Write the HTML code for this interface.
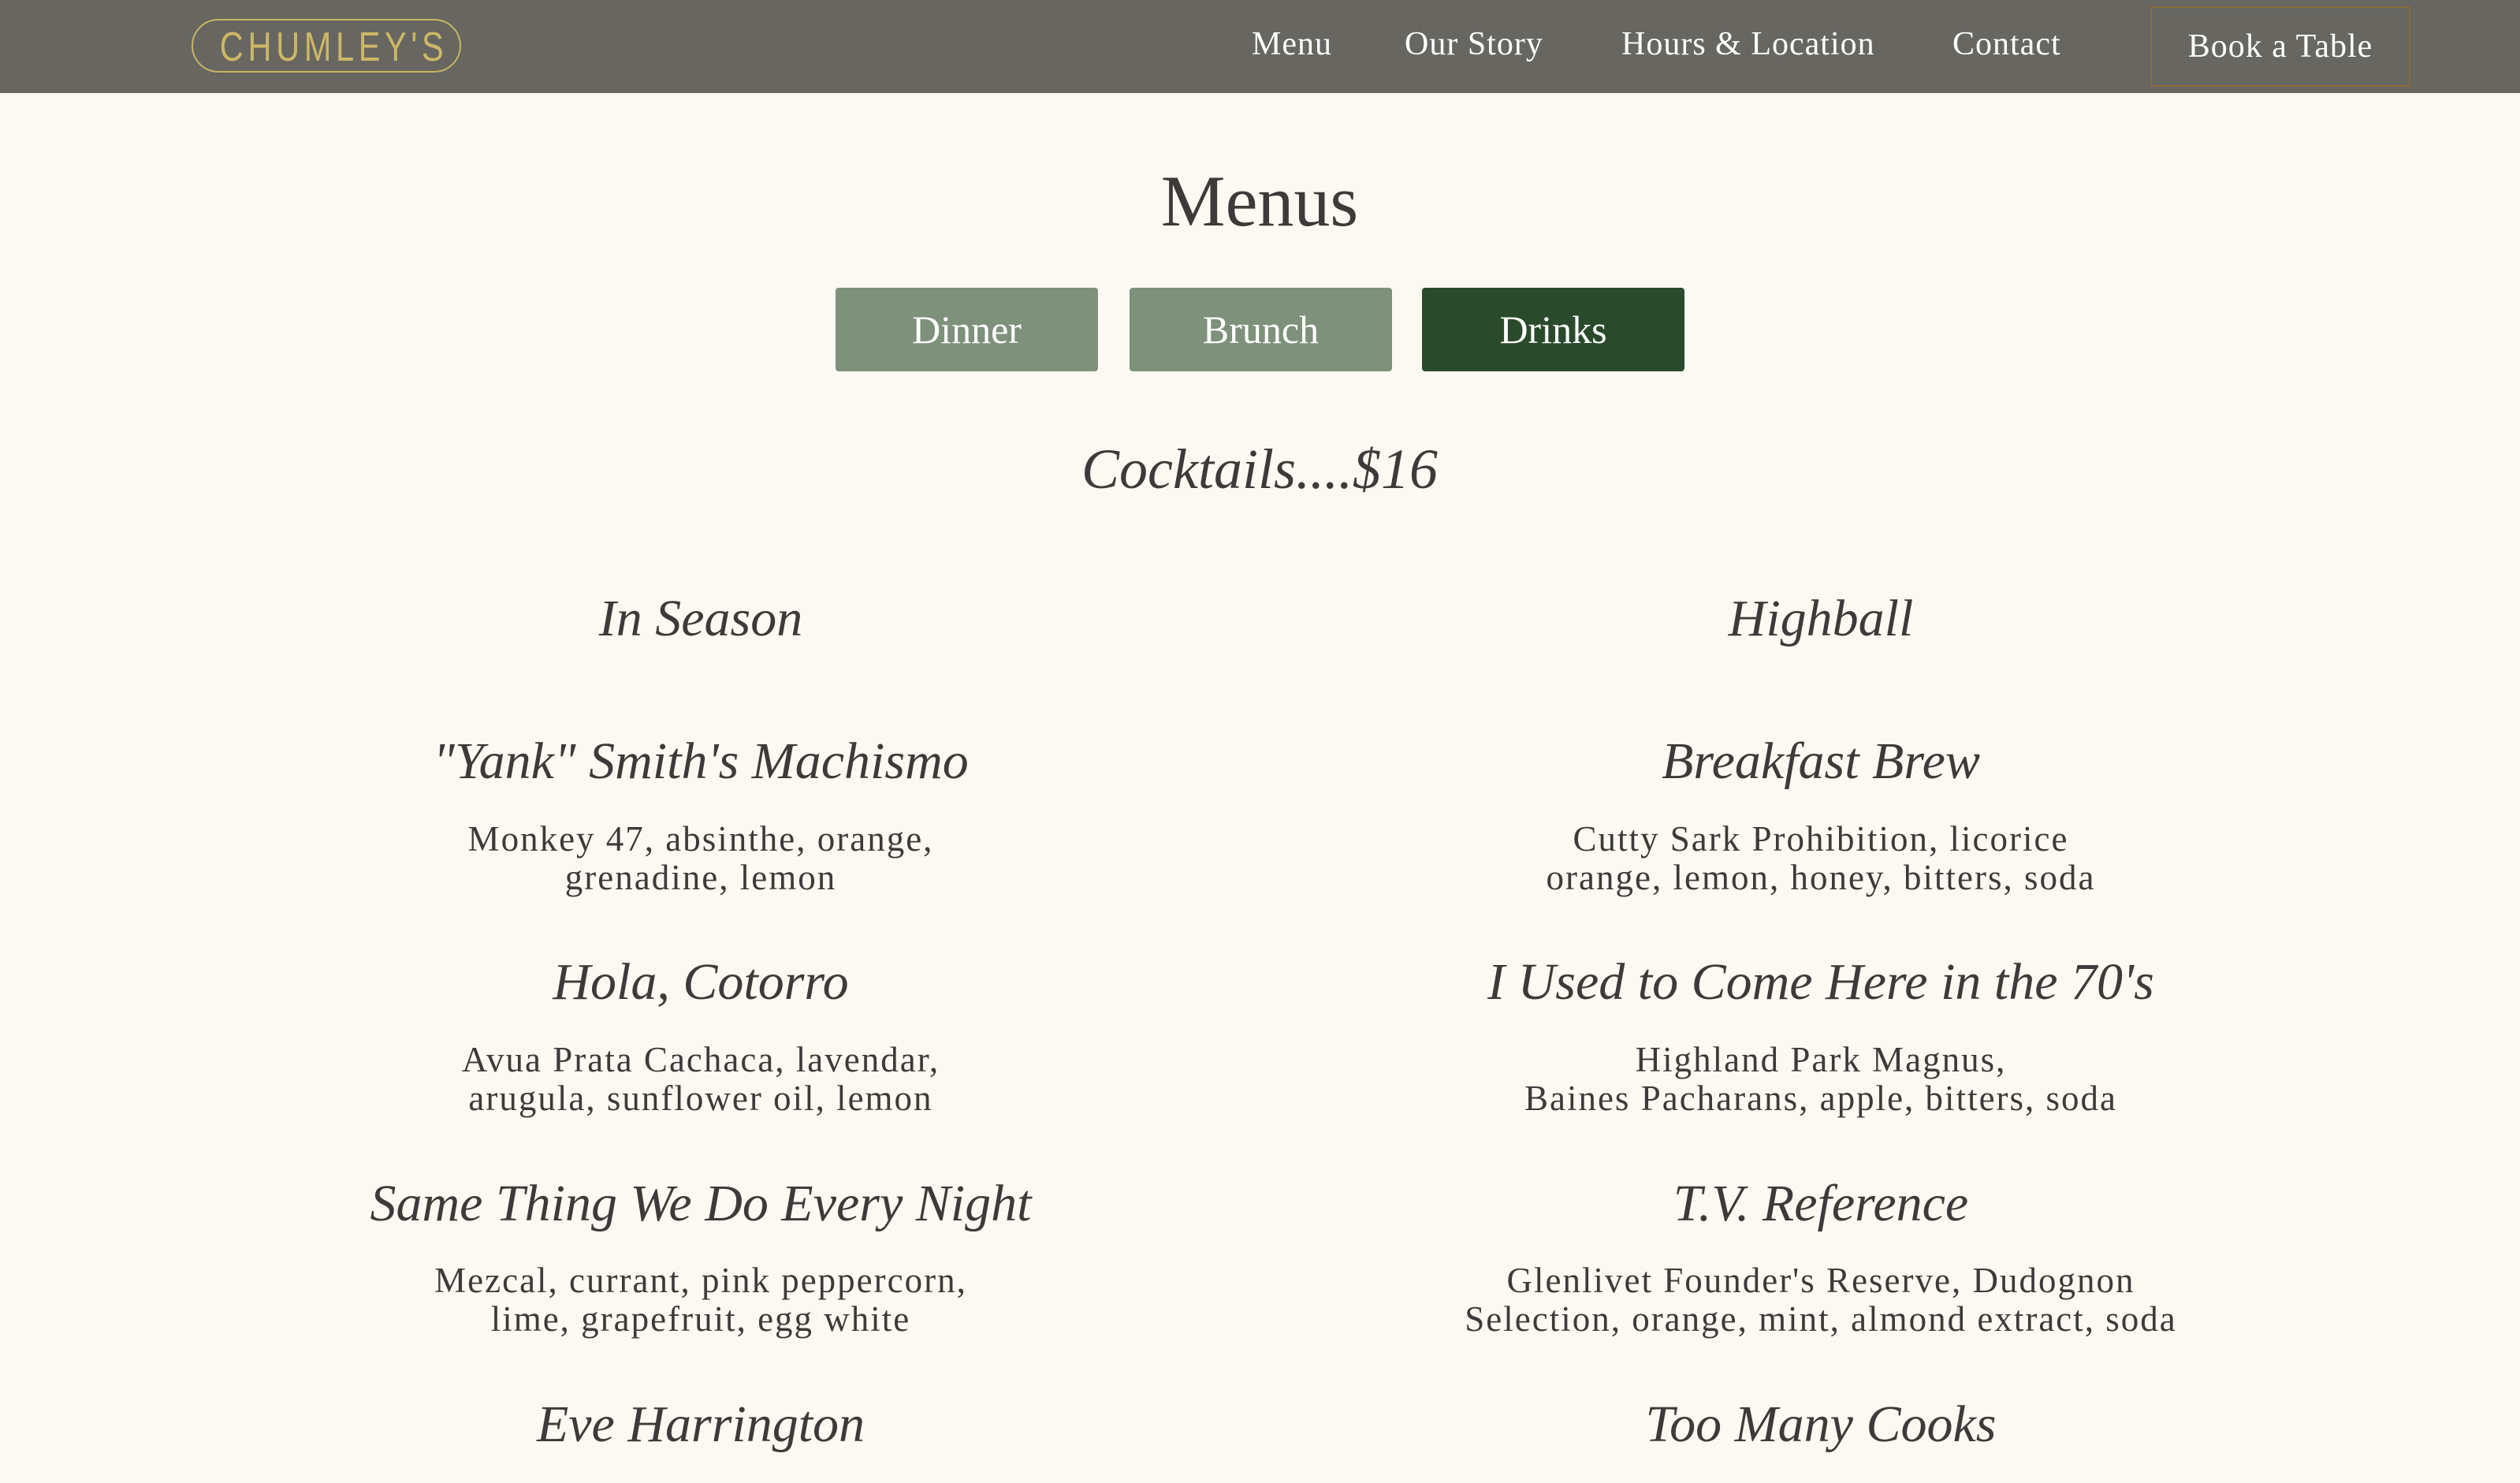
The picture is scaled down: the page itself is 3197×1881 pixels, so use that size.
<!DOCTYPE html>
<html><head><meta charset="utf-8"><style>
html,body{margin:0;padding:0}
body{width:3197px;height:1881px;background:#fcf9f2;position:relative;overflow:hidden;font-family:"Liberation Serif",serif;color:#3c3b39}
.nav{position:absolute;left:0;top:0;width:3197px;height:118px;background:#676661}
.logo{position:absolute;left:243px;top:24px;width:342px;height:68px;border:2px solid #c9b462;border-radius:36px;box-sizing:border-box}
.logo span{position:absolute;left:0;right:0;top:8px;text-align:center;font-family:"Liberation Sans",sans-serif;font-size:52px;line-height:52px;color:#cdb765;letter-spacing:7px;font-weight:normal;transform:scaleX(.8)}
.nl{position:absolute;top:30px;font-size:42px;line-height:52px;color:#fff;white-space:nowrap;letter-spacing:1px}
.book{position:absolute;left:2728px;top:8px;width:330px;height:102px;border:2px solid #8a6a3a;box-sizing:border-box;color:#fff;font-size:42px;text-align:center;line-height:98px;letter-spacing:1px}
.c{position:absolute;transform:translateX(-50%);white-space:nowrap;text-align:center}
.btn{position:absolute;top:365px;height:106px;width:333px;border-radius:4px;color:#fff;font-size:50px;text-align:center;line-height:106px}
.s{font-style:italic;font-size:66px;line-height:80px}
.d{font-size:45px;line-height:49px;letter-spacing:2px}
</style></head><body>
<div class="nav">
<div class="logo"><span>CHUMLEY'S</span></div>
<div class="nl" style="left:1588px">Menu</div>
<div class="nl" style="left:1782px">Our Story</div>
<div class="nl" style="left:2057px">Hours &amp; Location</div>
<div class="nl" style="left:2477px">Contact</div>
<div class="book">Book a Table</div>
</div>
<div class="c" style="left:1598px;top:200px;font-size:92px;line-height:110px">Menus</div>
<div class="btn" style="left:1060px;background:#7e917b">Dinner</div>
<div class="btn" style="left:1433px;background:#7e917b">Brunch</div>
<div class="btn" style="left:1804px;background:#2a4a2c">Drinks</div>
<div class="c s" style="left:1598px;top:553px;font-size:72px;line-height:84px">Cocktails....$16</div>

<div class="c s" style="left:889px;top:745px">In Season</div>
<div class="c s" style="left:2310px;top:745px">Highball</div>

<div class="c s" style="left:889px;top:926px">"Yank" Smith's Machismo</div>
<div class="c d" style="left:889px;top:1040px">Monkey 47, absinthe, orange,<br>grenadine, lemon</div>
<div class="c s" style="left:889px;top:1206px">Hola, Cotorro</div>
<div class="c d" style="left:889px;top:1320px">Avua Prata Cachaca, lavendar,<br>arugula, sunflower oil, lemon</div>
<div class="c s" style="left:889px;top:1487px">Same Thing We Do Every Night</div>
<div class="c d" style="left:889px;top:1600px">Mezcal, currant, pink peppercorn,<br>lime, grapefruit, egg white</div>
<div class="c s" style="left:889px;top:1767px">Eve Harrington</div>

<div class="c s" style="left:2310px;top:926px">Breakfast Brew</div>
<div class="c d" style="left:2310px;top:1040px">Cutty Sark Prohibition, licorice<br>orange, lemon, honey, bitters, soda</div>
<div class="c s" style="left:2310px;top:1206px">I Used to Come Here in the 70's</div>
<div class="c d" style="left:2310px;top:1320px">Highland Park Magnus,<br>Baines Pacharans, apple, bitters, soda</div>
<div class="c s" style="left:2310px;top:1487px">T.V. Reference</div>
<div class="c d" style="left:2310px;top:1600px">Glenlivet Founder's Reserve, Dudognon<br>Selection, orange, mint, almond extract, soda</div>
<div class="c s" style="left:2310px;top:1767px">Too Many Cooks</div>
</body></html>
